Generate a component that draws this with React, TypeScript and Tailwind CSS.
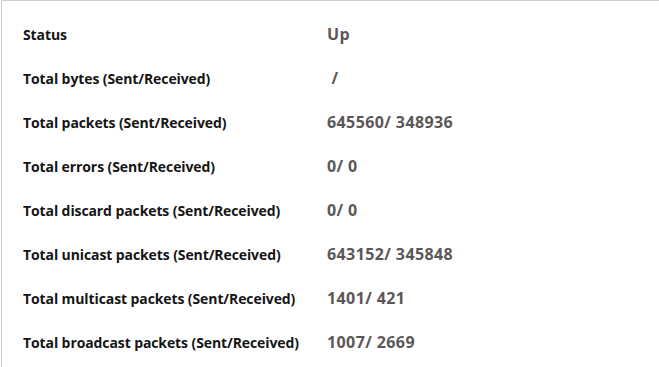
const rows: [string, string][] = [
  ['Status', 'Up'],
  ['Total bytes (Sent/Received)', ' /'],
  ['Total packets (Sent/Received)', '645560/ 348936'],
  ['Total errors (Sent/Received)', '0/ 0'],
  ['Total discard packets (Sent/Received)', '0/ 0'],
  ['Total unicast packets (Sent/Received)', '643152/ 345848'],
  ['Total multicast packets (Sent/Received)', '1401/ 421'],
  ['Total broadcast packets (Sent/Received)', '1007/ 2669'],
];

export default function App() {
  return (
    <div className="w-[659px] h-[367px] bg-white overflow-hidden pl-px">
      <div className="h-full border-l border-t border-[#cfcfcf] pt-[11px] pl-[21px] font-['Open_Sans',sans-serif]">
        {rows.map(([label, value]) => (
          <div key={label} className="flex items-center h-[44px]">
            <div className="w-[304px] text-[14px] tracking-[-0.1px] font-bold text-[#151515]">{label}</div>
            <div className="text-[16px] tracking-[0.4px] font-bold text-[#5c5757] whitespace-pre">{value}</div>
          </div>
        ))}
      </div>
    </div>
  );
}
